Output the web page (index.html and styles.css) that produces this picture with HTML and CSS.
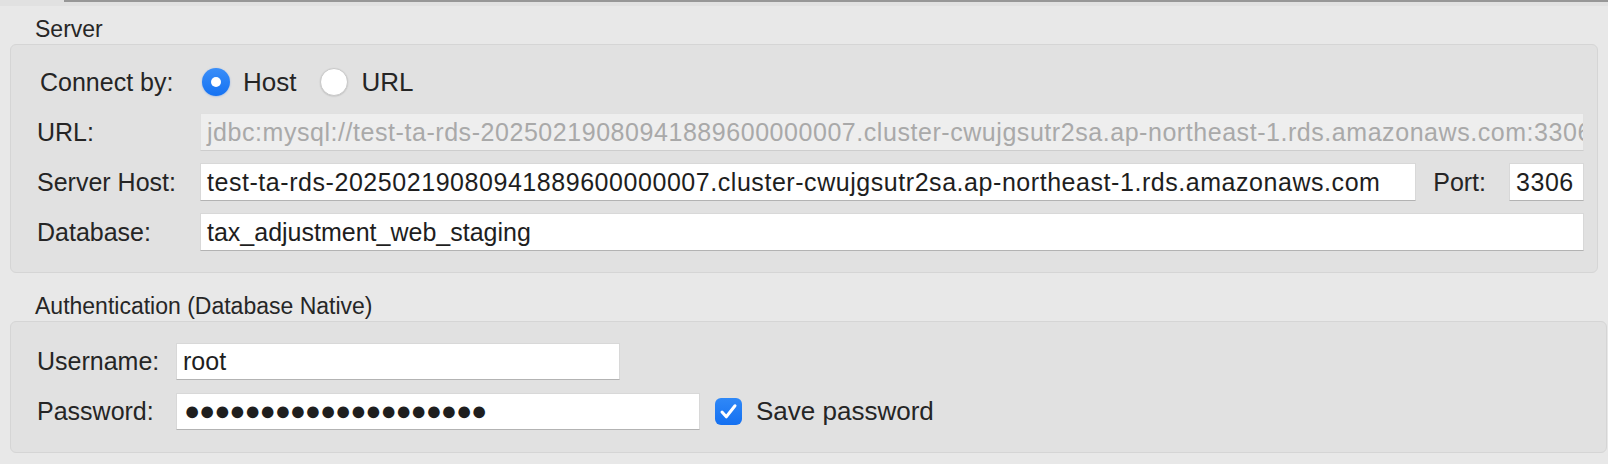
FILE: index.html
```html
<!DOCTYPE html>
<html>
<head>
<meta charset="utf-8">
<link rel="stylesheet" href="styles.css">
</head>
<body>
<div class="topstrip"><div class="topbar"></div></div>

<div class="section-label">Server</div>
<div class="panel panel-server">
  <div class="row">
    <div class="label label-connect">Connect by:</div>
    <div class="radio-group">
      <span class="radio checked"><span class="radio-dot"></span></span>
      <span class="radio-text">Host</span>
      <span class="radio radio-second"></span>
      <span class="radio-text">URL</span>
    </div>
  </div>
  <div class="row">
    <div class="label">URL:</div>
    <div class="field disabled stretch"><span class="value wide">jdbc:mysql://test-ta-rds-20250219080941889600000007.cluster-cwujgsutr2sa.ap-northeast-1.rds.amazonaws.com:3306</span></div>
  </div>
  <div class="row">
    <div class="label">Server Host:</div>
    <div class="field stretch"><span class="value wide">test-ta-rds-20250219080941889600000007.cluster-cwujgsutr2sa.ap-northeast-1.rds.amazonaws.com</span></div>
    <div class="port-label">Port:</div>
    <div class="field port-field"><span class="value wide">3306</span></div>
  </div>
  <div class="row">
    <div class="label">Database:</div>
    <div class="field stretch"><span class="value">tax_adjustment_web_staging</span></div>
  </div>
</div>

<div class="section-label second">Authentication (Database Native)</div>
<div class="panel panel-auth">
  <div class="row">
    <div class="label">Username:</div>
    <div class="field user-field"><span class="value">root</span></div>
  </div>
  <div class="row">
    <div class="label">Password:</div>
    <div class="field pass-field"><span class="dots">●●●●●●●●●●●●●●●●●●●●</span></div>
    <span class="checkbox">
      <svg width="27" height="27" viewBox="0 0 27 27"><path d="M7 14 L11.3 18.8 L20 7.8" fill="none" stroke="#fff" stroke-width="3" stroke-linecap="round" stroke-linejoin="round"/></svg>
    </span>
    <span class="check-text">Save password</span>
  </div>
</div>
</body>
</html>
```

FILE: styles.css
```css
html, body {
  margin: 0;
  padding: 0;
}
body {
  width: 1608px;
  height: 464px;
  overflow: hidden;
  background: #e8e8e8;
  font-family: "Liberation Sans", Arial, sans-serif;
  color: #252525;
}
.topstrip {
  height: 6px;
  background: #e1e1e1;
  padding-left: 64px;
}
.topbar {
  height: 2px;
  background: #979797;
}
.section-label {
  margin: 10px 0 2px 35px;
  font-size: 23px;
  line-height: 26px;
  color: #262626;
}
.section-label.second {
  margin-top: 20px;
}
.panel {
  background: #e1e1e1;
  border: 1px solid #d5d5d5;
  border-radius: 6px;
  margin-left: 10px;
  display: flex;
  flex-direction: column;
}
.panel-server {
  margin-right: 10px;
  padding: 18px 13px 21px 26px;
  gap: 12px;
}
.panel-auth {
  margin-right: 1px;
  padding: 21px 13px 22px 26px;
  gap: 13px;
}
.row {
  display: flex;
  align-items: center;
  height: 38px;
  font-size: 25px;
}
.panel-auth .row {
  height: 37px;
}
.label {
  width: 163px;
  flex: none;
  white-space: nowrap;
}
.panel-auth .label {
  width: 139px;
}
.label-connect {
  box-sizing: border-box;
  padding-left: 3px;
}
.radio-group {
  display: flex;
  align-items: center;
  margin-left: 2px;
}
.radio {
  box-sizing: border-box;
  width: 28px;
  height: 28px;
  border-radius: 50%;
  background: #fff;
  border: 1px solid #c9c9c9;
  box-shadow: 0 0.5px 1.5px rgba(0,0,0,0.15);
  display: flex;
  align-items: center;
  justify-content: center;
  flex: none;
}
.radio.checked {
  border: none;
  background: linear-gradient(#3a8ef8, #1572f2);
  box-shadow: 0 0.5px 2px rgba(20,100,230,0.35);
}
.radio-dot {
  width: 10px;
  height: 10px;
  border-radius: 50%;
  background: #fff;
}
.radio-second {
  margin-left: 24px;
}
.radio-text {
  margin-left: 13px;
  font-size: 26px;
}
.field {
  box-sizing: border-box;
  height: 100%;
  background: #fff;
  border: 1px solid #d8d8d8;
  border-bottom-color: #b3b3b3;
  padding: 0 6px;
  display: flex;
  align-items: center;
  overflow: hidden;
  white-space: nowrap;
  font-size: 25px;
  color: #1e1e1e;
}
.field.disabled {
  background: #eeeeee;
  border-color: #e0e0e0;
  border-bottom-color: #cdcdcd;
  color: #a9a9a9;
}
.stretch {
  flex: 1;
  min-width: 0;
}
.value.wide {
  letter-spacing: 0.55px;
}
.port-label {
  margin: 0 23px 0 17px;
  white-space: nowrap;
}
.port-field {
  width: 75px;
  flex: none;
}
.user-field {
  width: 444px;
  flex: none;
}
.pass-field {
  width: 524px;
  flex: none;
  padding-left: 7px;
}
.dots {
  font-size: 27px;
  letter-spacing: -1.2px;
  color: #1e1e1e;
}
.checkbox {
  width: 27px;
  height: 27px;
  margin-left: 15px;
  border-radius: 6px;
  background: linear-gradient(#2f88f7, #1470f1);
  display: flex;
  flex: none;
}
.check-text {
  margin-left: 14px;
  font-size: 26px;
}
```
